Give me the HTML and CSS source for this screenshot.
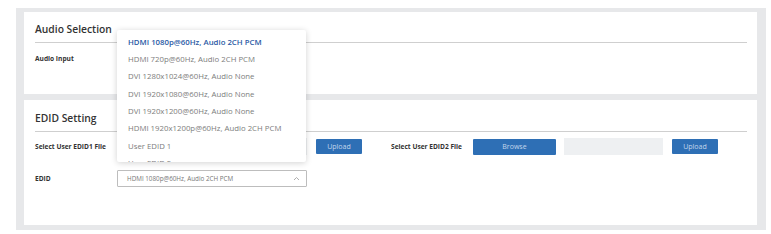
FILE: index.html
```html
<!DOCTYPE html>
<html>
<head>
<meta charset="utf-8">
<link rel="stylesheet" href="styles.css">
</head>
<body>
<div class="wrap">
  <section class="card card-audio">
    <h2 class="card-title">Audio Selection</h2>
    <div class="row row-audio">
      <span class="label">Audio Input</span>
    </div>
  </section>
  <section class="card card-edid">
    <h2 class="card-title">EDID Setting</h2>
    <div class="row row-files">
      <div class="file-group">
        <span class="label">Select User EDID1 File</span>
        <button class="btn btn-browse">Browse</button>
        <span class="file-name"></span>
        <button class="btn btn-upload">Upload</button>
      </div>
      <div class="file-group">
        <span class="label">Select User EDID2 File</span>
        <button class="btn btn-browse">Browse</button>
        <span class="file-name"></span>
        <button class="btn btn-upload">Upload</button>
      </div>
    </div>
    <div class="row row-edid">
      <span class="label">EDID</span>
      <div class="select-wrap">
        <div class="select">
          <span class="select-text">HDMI 1080p@60Hz, Audio 2CH PCM</span>
          <svg class="chev" width="7" height="5" viewBox="0 0 7 5"><path d="M1 4 L3.5 1.5 L6 4" fill="none" stroke="#9a9a9a" stroke-width="0.8"/></svg>
        </div>
        <ul class="menu">
          <li class="item active">HDMI 1080p@60Hz, Audio 2CH PCM</li>
          <li class="item">HDMI 720p@60Hz, Audio 2CH PCM</li>
          <li class="item">DVI 1280x1024@60Hz, Audio None</li>
          <li class="item">DVI 1920x1080@60Hz, Audio None</li>
          <li class="item">DVI 1920x1200@60Hz, Audio None</li>
          <li class="item">HDMI 1920x1200p@60Hz, Audio 2CH PCM</li>
          <li class="item">User EDID 1</li>
          <li class="item">User EDID 2</li>
        </ul>
      </div>
    </div>
  </section>
</div>
</body>
</html>
```
FILE: styles.css
```css
* { box-sizing: border-box; }
html, body { margin: 0; padding: 0; background: #ffffff; }
body {
  font-family: "Open Sans", "Noto Sans", sans-serif;
  width: 771px;
  height: 234px;
  overflow: hidden;
}
.wrap {
  margin: 8px 5px 4px 16px;
  padding: 4px 9px 5px 8px;
  background: #e7e8ea;
  display: flex;
  flex-direction: column;
  gap: 6px;
  height: 222px;
}
.card {
  background: #ffffff;
  padding: 10px 10px 0 10px;
}
.card-audio { height: 82px; }
.card-edid { height: 125px; padding-top: 11px; }
.card-title {
  margin: 0 0 0 1px;
  font-size: 10.3px;
  line-height: 14px;
  font-weight: 600;
  color: #333;
  padding-bottom: 6px;
  border-bottom: 1px solid #cfcfcf;
}
.label {
  font-size: 6.6px;
  font-weight: 700;
  color: #333;
  width: 82px;
  flex: none;
}
.row { display: flex; align-items: center; padding-left: 1px; }
.row-audio { margin-top: 10px; height: 10px; }
.row-files { margin-top: 6px; height: 17px; gap: 29px; }
.file-group { display: flex; align-items: center; }
.btn {
  border: none;
  background: #2e6fb5;
  color: #c3d6ec;
  font-family: "Open Sans", "Noto Sans", sans-serif;
  font-size: 7px;
  height: 16px;
  padding: 0;
  border-radius: 1px;
}
.btn-browse { width: 83px; }
.btn-upload { width: 46px; height: 15px; }
.file-name {
  width: 99px;
  height: 17px;
  background: #eef0f2;
  margin: 0 9px 0 8px;
}
.row-edid { margin-top: 15px; height: 17px; }
.select-wrap { position: relative; }
.select {
  width: 190px;
  height: 17px;
  border: 1px solid #bdbdbd;
  border-radius: 1px;
  display: flex;
  align-items: center;
  justify-content: space-between;
  padding: 0 6px 0 9px;
}
.select-text { font-size: 6.3px; color: #777; }
.menu {
  position: absolute;
  left: 0;
  bottom: 25px;
  width: 189px;
  height: 132px;
  margin: 0;
  padding: 3.5px 0 0 0;
  list-style: none;
  background: #fff;
  box-shadow: 0 1px 6px rgba(0,0,0,0.18);
  border-radius: 2px;
  overflow: hidden;
}
.item {
  height: 17.4px;
  line-height: 17.4px;
  padding-left: 11px;
  font-size: 7.8px;
  color: #7d7d7d;
  white-space: nowrap;
}
.item.active { color: #2a5aa5; font-weight: 600; }
```
